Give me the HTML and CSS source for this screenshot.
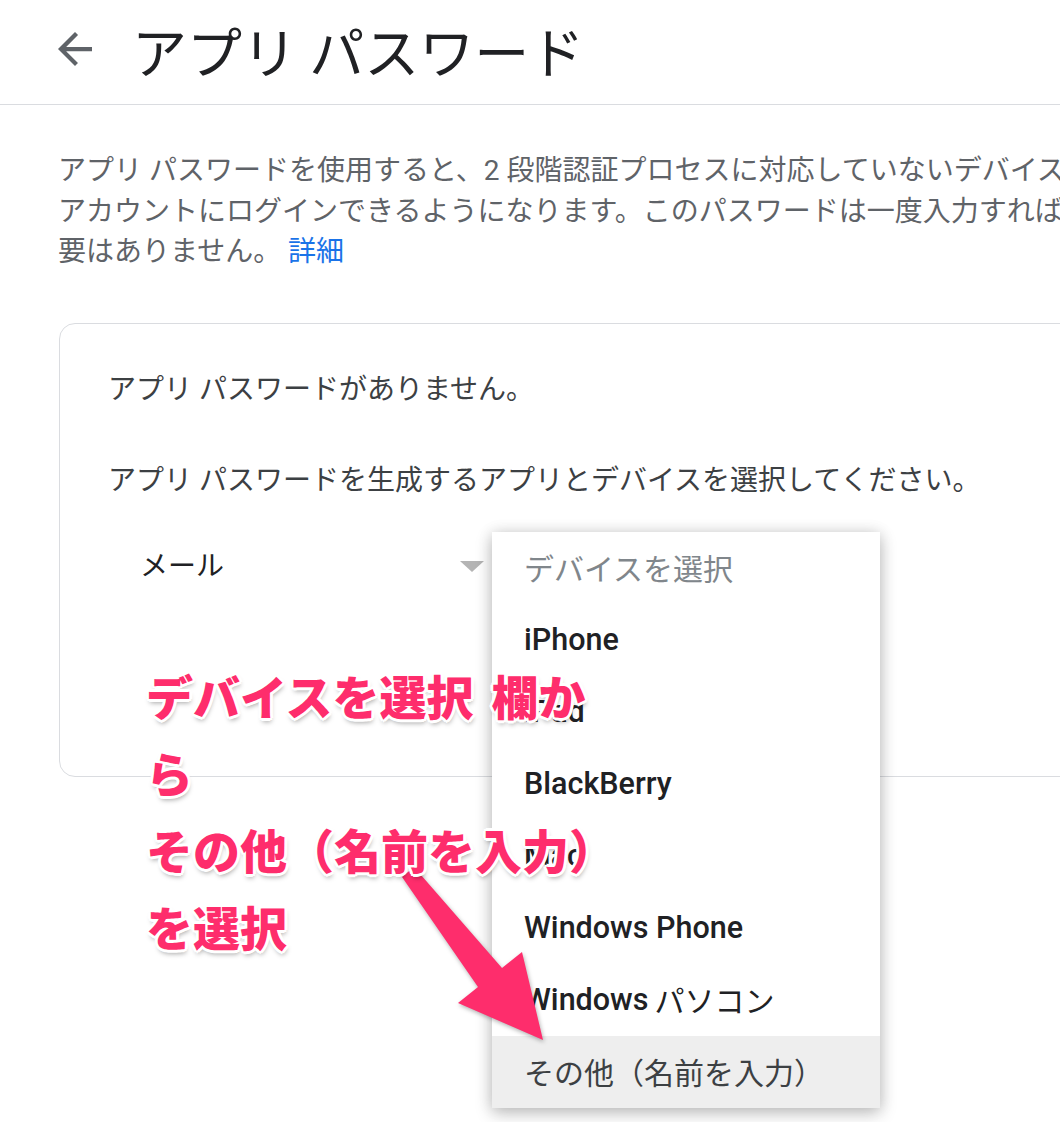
FILE: index.html
```html
<!DOCTYPE html>
<html lang="ja">
<head>
<meta charset="utf-8">
<title>アプリ パスワード</title>
<link rel="stylesheet" href="styles.css">
</head>
<body>
<div class="page">
  <header class="topbar">
    <svg class="back" viewBox="4 4 16 16" width="34" height="34" aria-hidden="true">
      <path d="M20 11H7.83l5.59-5.59L12 4l-8 8 8 8 1.41-1.41L7.83 13H20v-2z" fill="#5f6368"/>
    </svg>
    <h1 class="title">アプリ パスワード</h1>
  </header>

  <main class="content">
    <p class="intro">
      <span class="line">アプリ パスワードを使用すると、2 段階認証プロセスに対応していないデバイス上のアプリから Google</span>
      <span class="line">アカウントにログインできるようになります。このパスワードは一度入力すれば、覚えておく必</span>
      <span class="line">要はありません。 <a class="link" href="#">詳細</a></span>
    </p>

    <section class="card">
      <p class="card-text">アプリ パスワードがありません。</p>
      <p class="card-text second">アプリ パスワードを生成するアプリとデバイスを選択してください。</p>
      <div class="selects">
        <div class="select">
          <span class="select-value">メール</span>
          <span class="caret"></span>
        </div>
      </div>
    </section>
  </main>

  <ul class="menu">
    <li class="item placeholder">デバイスを選択</li>
    <li class="item latin">iPhone</li>
    <li class="item latin">iPad</li>
    <li class="item latin">BlackBerry</li>
    <li class="item latin">Mac</li>
    <li class="item latin">Windows Phone</li>
    <li class="item latin">Windows <span class="ja">パソコン</span></li>
    <li class="item active">その他（名前を入力）</li>
  </ul>

  <svg class="callout-arrow" width="1060" height="1122" viewBox="0 0 1060 1122" aria-hidden="true">
    <polygon points="402,877 478,987 458,1003 543,1040 522,952 502,968 414,867" fill="#fe2d6c"/>
  </svg>

  <div class="note">
    <div class="note-line">デバイスを選択<span class="gap">欄か</span></div>
    <div class="note-line">ら</div>
    <div class="note-line">その他（名前を入力）</div>
    <div class="note-line">を選択</div>
  </div>
</div>
</body>
</html>
```

FILE: styles.css
```css
* {
  box-sizing: border-box;
}

html, body {
  margin: 0;
  padding: 0;
  background: #ffffff;
}

body {
  width: 1060px;
  height: 1122px;
  overflow: hidden;
  font-family: Roboto, "Noto Sans CJK JP", sans-serif;
}

.page {
  position: relative;
  width: 1060px;
  height: 1122px;
  overflow: hidden;
}

.topbar {
  display: flex;
  align-items: center;
  gap: 40px;
  height: 105px;
  padding: 0 0 6px 58px;
  border-bottom: 1px solid #dadce0;
}

.back {
  display: block;
  flex: none;
}

.title {
  margin: 0;
  font-family: "Noto Sans CJK JP", sans-serif;
  font-weight: 400;
  font-size: 55px;
  line-height: 60px;
  color: #202124;
  white-space: nowrap;
}

.content {
  padding: 46px 0 0 58px;
}

.intro {
  margin: 0;
  font-size: 28px;
  line-height: 40.5px;
  color: #5f6368;
}

.line {
  display: block;
  white-space: nowrap;
}

.link {
  color: #1a73e8;
  text-decoration: none;
}

.card {
  margin: 50px 0 0 1px;
  width: 1200px;
  height: 454px;
  border: 1px solid #dadce0;
  border-radius: 16px;
  padding: 46px 0 0 48px;
}

.card-text {
  margin: 0;
  font-size: 28px;
  line-height: 40px;
  color: #3c4043;
  white-space: nowrap;
}

.card-text.second {
  margin-top: 51px;
}

.selects {
  display: flex;
  margin-top: 46px;
}

.select {
  display: flex;
  align-items: center;
  justify-content: space-between;
  width: 376px;
  height: 40px;
  padding-left: 32px;
}

.select-value {
  font-size: 28px;
  line-height: 40px;
  color: #202124;
}

.caret {
  width: 0;
  height: 0;
  border-left: 12px solid transparent;
  border-right: 12px solid transparent;
  border-top: 11px solid #b4b4b4;
}

.menu {
  position: absolute;
  left: 492px;
  top: 532px;
  width: 388px;
  margin: 0;
  padding: 0;
  list-style: none;
  background: #ffffff;
  box-shadow: 0 5px 16px rgba(0, 0, 0, 0.24), 0 0 14px rgba(0, 0, 0, 0.1);
}

.item {
  height: 72px;
  display: flex;
  align-items: center;
  padding: 0 0 2px 32px;
  font-size: 30px;
  color: #202124;
  white-space: nowrap;
}

.item.placeholder {
  color: #80868b;
}

.item.latin {
  font-weight: 500;
  font-size: 30.5px;
}

.item .ja {
  font-weight: 400;
  font-size: 30px;
  margin-left: 6px;
}

.item.active {
  background: #eeeeee;
  color: #3c4043;
}

.callout-arrow {
  position: absolute;
  left: 0;
  top: 0;
  filter: drop-shadow(1px 2px 2px rgba(0, 0, 0, 0.3));
}

.note {
  position: absolute;
  left: 146px;
  top: 656px;
  font-family: "Noto Sans CJK JP", sans-serif;
  font-weight: 900;
  font-size: 47px;
  color: #fe2d6c;
  text-shadow:
    3px 0 0 #fff, -3px 0 0 #fff, 0 3px 0 #fff, 0 -3px 0 #fff,
    2px 2px 0 #fff, -2px -2px 0 #fff, 2px -2px 0 #fff, -2px 2px 0 #fff,
    1px 4px 5px rgba(0, 0, 0, 0.35);
}

.note-line {
  height: 77px;
  line-height: 77px;
  white-space: nowrap;
}

.gap {
  margin-left: 18px;
}
```
